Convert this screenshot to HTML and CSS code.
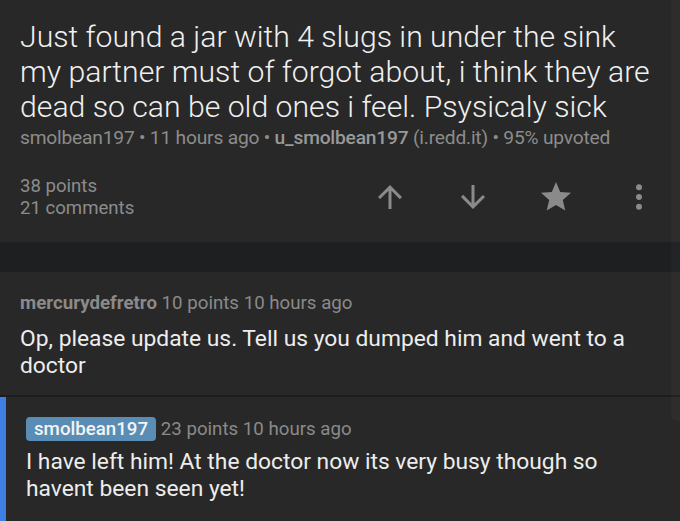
FILE: index.html
```html
<!DOCTYPE html>
<html lang="en">
<head>
  <meta charset="UTF-8" />
  <meta name="viewport" content="width=device-width, initial-scale=1.0"/>
  <title>Post</title>
  <link rel="stylesheet" href="styles.css">
</head>
<body>
  <div class="post">
    <h1 class="title">Just found a jar with 4 slugs in under the sink my partner must of forgot about, i think they are dead so can be old ones i feel. Psysicaly sick</h1>
    <div class="meta">smolbean197 • 11 hours ago • <span class="sub">u_smolbean197</span> (i.redd.it) • 95% upvoted</div>
    <div class="stats-row">
      <div class="stats">
        <div>38 points</div>
        <div>21 comments</div>
      </div>
      <div class="actions">
        <button class="action" aria-label="upvote">
          <svg viewBox="0 0 24 24" width="36" height="36"><path d="M4 12l1.41 1.41L11 7.83V20h2V7.83l5.58 5.59L20 12l-8-8-8 8z"/></svg>
        </button>
        <button class="action" aria-label="downvote">
          <svg viewBox="0 0 24 24" width="36" height="36"><path d="M20 12l-1.41-1.41L13 16.17V4h-2v12.17l-5.58-5.59L4 12l8 8 8-8z"/></svg>
        </button>
        <button class="action" aria-label="save">
          <svg viewBox="0 0 24 24" width="36" height="36"><path d="M12 17.27L18.18 21l-1.64-7.03L22 9.24l-7.19-.61L12 2 9.19 8.63 2 9.24l5.46 4.73L5.82 21z"/></svg>
        </button>
        <button class="action" aria-label="more">
          <svg viewBox="0 0 24 24" width="36" height="36"><circle cx="12" cy="5.5" r="2"/><circle cx="12" cy="12" r="2"/><circle cx="12" cy="18.5" r="2"/></svg>
        </button>
      </div>
    </div>
  </div>

  <div class="band"></div>

  <div class="comment">
    <div class="comment-head"><span class="author">mercurydefretro</span> 10 points 10 hours ago</div>
    <div class="comment-body">Op, please update us. Tell us you dumped him and went to a doctor</div>
  </div>

  <div class="comment reply">
    <div class="comment-head"><span class="badge">smolbean197</span> 23 points 10 hours ago</div>
    <div class="comment-body">I have left him! At the doctor now its very busy though so havent been seen yet!</div>
  </div>

  <div class="scroll-strip"></div>
</body>
</html>
```

FILE: styles.css
```css
body { margin: 0; background: #282828; font-family: Roboto, "Noto Sans", sans-serif; color: #ececec; overflow: hidden; }
.post { padding: 19px 0 23px 20px; }
.title { margin: 0; font-size: 30.2px; font-weight: 300; line-height: 35px; color: #f0f0f0; padding-right: 20px; }
.meta { margin-top: 3px; font-size: 19.2px; line-height: 22px; color: #8c8c8c; letter-spacing: -0.2px; }
.meta .sub { font-weight: 500; color: #999; }
.stats-row { display: flex; align-items: center; justify-content: space-between; margin-top: 26px; }
.stats { font-size: 18.6px; line-height: 22px; color: #8c8c8c; }
.actions { display: flex; }
.action { width: 83px; height: 44px; padding: 0; border: 0; background: none; display: flex; align-items: center; justify-content: center; }
.action svg { fill: #8a8a8a; display: block; }
.band { height: 30px; background: #1e1f20; }
.comment { padding: 20px 20px 16px 20px; border-bottom: 2px solid #1d1d1d; }
.comment-head { font-size: 18.7px; line-height: 22px; color: #8a8a8a; }
.author { font-weight: 700; color: #8a8a8a; }
.comment-body { margin-top: 11px; font-size: 22.8px; line-height: 27px; color: #ededed; }
.reply { border-left: 6px solid #3d7fe3; border-bottom: 0; padding: 20px 20px 20px 20px; }
.reply .comment-head { line-height: 24px; }
.badge { display: inline-block; background: #5a8db6; color: #f4f4f4; font-weight: 500; padding: 0 8px 0 8px; border-radius: 4px; line-height: 24px; }
.reply .comment-body { margin-top: 7px; }
.scroll-strip { position: absolute; top: 0; right: 0; width: 9px; height: 421px; background: rgba(255, 255, 255, 0.025); border-radius: 0 0 0 6px; }
```
